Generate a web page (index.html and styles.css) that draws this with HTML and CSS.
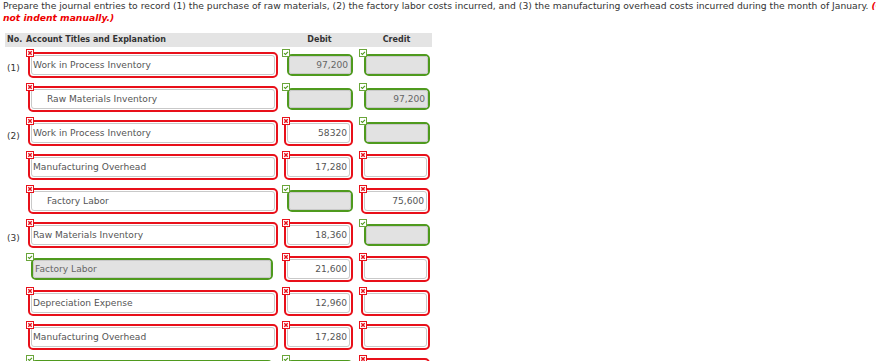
FILE: index.html
```html
<!DOCTYPE html>
<html lang="en">
<head>
    <meta charset="UTF-8">
    <title>Journal Entries</title>
    <link rel="stylesheet" href="styles.css">
</head>
<body>
    <p class="prompt">
        <span class="line">Prepare the journal entries to record (1) the purchase of raw materials, (2) the factory labor costs incurred, and (3) the manufacturing overhead costs incurred during the month of January. <em class="note">(Credit account titles are automatically indented when amount is entered. Do</em></span><br>
        <em class="note">not indent manually.)</em>
    </p>

    <div class="journal">
        <div class="head">
            <div>No.</div>
            <div class="head-acct">Account Titles and Explanation</div>
            <div class="head-amt">Debit</div>
            <div class="head-amt">Credit</div>
        </div>

        <div class="row">
            <div class="no">(1)</div>
            <div class="cell acct wrong"><span class="mark"></span><div class="box"><input value="Work in Process Inventory"></div></div>
            <div class="cell amt right"><span class="mark"></span><div class="box"><input class="num" value="97,200" disabled></div></div>
            <div class="cell amt right"><span class="mark"></span><div class="box"><input class="num" value="" disabled></div></div>
        </div>

        <div class="row">
            <div class="no"></div>
            <div class="cell acct wrong"><span class="mark"></span><div class="box"><input class="indent" value="Raw Materials Inventory"></div></div>
            <div class="cell amt right"><span class="mark"></span><div class="box"><input class="num" value="" disabled></div></div>
            <div class="cell amt right"><span class="mark"></span><div class="box"><input class="num" value="97,200" disabled></div></div>
        </div>

        <div class="row">
            <div class="no">(2)</div>
            <div class="cell acct wrong"><span class="mark"></span><div class="box"><input value="Work in Process Inventory"></div></div>
            <div class="cell amt wrong"><span class="mark"></span><div class="box"><input class="num" value="58320"></div></div>
            <div class="cell amt right"><span class="mark"></span><div class="box"><input class="num" value="" disabled></div></div>
        </div>

        <div class="row">
            <div class="no"></div>
            <div class="cell acct wrong"><span class="mark"></span><div class="box"><input value="Manufacturing Overhead"></div></div>
            <div class="cell amt wrong"><span class="mark"></span><div class="box"><input class="num" value="17,280"></div></div>
            <div class="cell amt wrong"><span class="mark"></span><div class="box"><input class="num" value=""></div></div>
        </div>

        <div class="row">
            <div class="no"></div>
            <div class="cell acct wrong"><span class="mark"></span><div class="box"><input class="indent" value="Factory Labor"></div></div>
            <div class="cell amt right"><span class="mark"></span><div class="box"><input class="num" value="" disabled></div></div>
            <div class="cell amt wrong"><span class="mark"></span><div class="box"><input class="num" value="75,600"></div></div>
        </div>

        <div class="row">
            <div class="no">(3)</div>
            <div class="cell acct wrong"><span class="mark"></span><div class="box"><input value="Raw Materials Inventory"></div></div>
            <div class="cell amt wrong"><span class="mark"></span><div class="box"><input class="num" value="18,360"></div></div>
            <div class="cell amt right"><span class="mark"></span><div class="box"><input class="num" value="" disabled></div></div>
        </div>

        <div class="row">
            <div class="no"></div>
            <div class="cell acct right"><span class="mark"></span><div class="box"><input value="Factory Labor" disabled></div></div>
            <div class="cell amt wrong"><span class="mark"></span><div class="box"><input class="num" value="21,600"></div></div>
            <div class="cell amt wrong"><span class="mark"></span><div class="box"><input class="num" value=""></div></div>
        </div>

        <div class="row">
            <div class="no"></div>
            <div class="cell acct wrong"><span class="mark"></span><div class="box"><input value="Depreciation Expense"></div></div>
            <div class="cell amt wrong"><span class="mark"></span><div class="box"><input class="num" value="12,960"></div></div>
            <div class="cell amt wrong"><span class="mark"></span><div class="box"><input class="num" value=""></div></div>
        </div>

        <div class="row">
            <div class="no"></div>
            <div class="cell acct wrong"><span class="mark"></span><div class="box"><input value="Manufacturing Overhead"></div></div>
            <div class="cell amt wrong"><span class="mark"></span><div class="box"><input class="num" value="17,280"></div></div>
            <div class="cell amt wrong"><span class="mark"></span><div class="box"><input class="num" value=""></div></div>
        </div>

        <div class="row">
            <div class="no"></div>
            <div class="cell acct right"><span class="mark"></span><div class="box"><input value="" disabled></div></div>
            <div class="cell amt right"><span class="mark"></span><div class="box"><input class="num" value="" disabled></div></div>
            <div class="cell amt wrong"><span class="mark"></span><div class="box"><input class="num" value=""></div></div>
        </div>
    </div>
</body>
</html>
```

FILE: styles.css
```css
html, body {
    overflow: hidden;
}
body {
    margin: 0;
    padding: 0 5px;
    font-family: 'DejaVu Sans', Verdana, sans-serif;
    color: #333;
}
.prompt {
    margin: 0 0 0 -2px;
    font-size: 9.2px;
    line-height: 12px;
    white-space: nowrap;
}
.note {
    color: #e00;
    font-weight: bold;
}
.journal {
    margin-top: 9px;
    width: 427px;
}
.head,
.row {
    display: grid;
    grid-template-columns: 21px 256px 77px 71px;
}
.head {
    background-color: #e4e4e4;
    height: 14px;
    line-height: 14px;
    font-size: 8px;
    font-weight: bold;
    padding-left: 2px;
    margin-bottom: 2px;
}
.head-acct {
    margin-left: -2px;
}
.head-amt {
    width: 71px;
    text-align: center;
}
.row {
    height: 34px;
}
.no {
    font-size: 9px;
    padding: 14px 0 0 2px;
}
.cell {
    position: relative;
    box-sizing: border-box;
}
.acct {
    width: 252px;
}
.amt {
    width: 71px;
}
.mark {
    position: absolute;
    top: 0;
    left: 0;
    width: 6px;
    height: 6px;
    background: #fff center / 6px 6px no-repeat;
}
.wrong .mark {
    border: 1px solid #e8101a;
    background-image: url("data:image/svg+xml,%3Csvg xmlns='http://www.w3.org/2000/svg' viewBox='0 0 6 6'%3E%3Cpath d='M1.3 1.3L4.7 4.7M4.7 1.3L1.3 4.7' stroke='%23e8101a' stroke-width='1.4'/%3E%3C/svg%3E");
}
.right .mark {
    border: 1px solid #6aa53a;
    background-image: url("data:image/svg+xml,%3Csvg xmlns='http://www.w3.org/2000/svg' viewBox='0 0 6 6'%3E%3Cpath d='M1 3.2L2.4 4.4L5 1.8' fill='none' stroke='%234f9a1e' stroke-width='1.1'/%3E%3C/svg%3E");
}
.box {
    box-sizing: border-box;
    border-radius: 5px;
}
.wrong {
    padding: 3px 0 0 2px;
}
.wrong .box {
    height: 26px;
    border: 2px solid #e8101a;
    padding: 1px;
}
.right {
    padding: 5px 0 0 5px;
}
.right .box {
    height: 22px;
    border: 2px solid #4f9a1e;
}
.acct.right {
    padding-right: 5px;
}
input {
    display: block;
    box-sizing: border-box;
    width: 100%;
    height: 100%;
    margin: 0;
    border: 1px solid #c9c9c9;
    border-radius: 3px;
    padding: 0 2px 0 1px;
    font-family: 'DejaVu Sans', Verdana, sans-serif;
    font-size: 9.1px;
    color: #555;
    background-color: #fff;
}
input:disabled {
    background-color: #e2e2e2;
    color: #666;
}
.right input {
    border-radius: 2px;
}
.num {
    text-align: right;
}
.indent {
    padding-left: 15px;
}
```
